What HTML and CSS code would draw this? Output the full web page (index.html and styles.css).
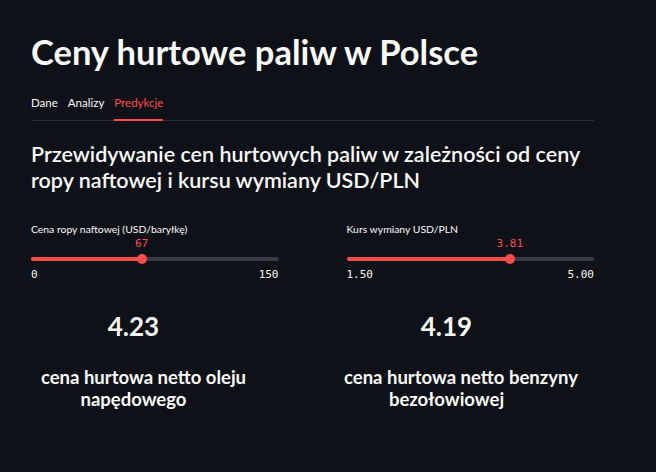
FILE: index.html
```html
<!DOCTYPE html>
<html lang="pl">
<head>
<meta charset="utf-8">
<title>Ceny hurtowe paliw w Polsce</title>
<link rel="stylesheet" href="styles.css">
</head>
<body>
<main class="main">
  <h1 class="title">Ceny hurtowe paliw w Polsce</h1>
  <nav class="tabs">
    <span class="tab">Dane</span>
    <span class="tab">Analizy</span>
    <span class="tab tab-active">Predykcje</span>
  </nav>
  <h3 class="subheader">Przewidywanie cen hurtowych paliw w zależności od ceny<br>ropy naftowej i kursu wymiany USD/PLN</h3>
  <section class="sliders">
    <div class="slider">
      <div class="slider-label">Cena ropy naftowej (USD/baryłkę)</div>
      <div class="slider-value-row">
        <span class="slider-value" style="left: 44.67%">67</span>
      </div>
      <div class="slider-track">
        <div class="slider-fill" style="width: 44.67%"></div>
        <div class="slider-thumb" style="left: 44.67%"></div>
      </div>
      <div class="slider-ticks"><span>0</span><span>150</span></div>
    </div>
    <div class="slider">
      <div class="slider-label">Kurs wymiany USD/PLN</div>
      <div class="slider-value-row">
        <span class="slider-value" style="left: 66%">3.81</span>
      </div>
      <div class="slider-track">
        <div class="slider-fill" style="width: 66%"></div>
        <div class="slider-thumb" style="left: 66%"></div>
      </div>
      <div class="slider-ticks"><span>1.50</span><span>5.00</span></div>
    </div>
  </section>
  <section class="results">
    <div class="result">
      <div class="result-value">4.23</div>
      <div class="result-label">
        <span class="line">cena hurtowa netto oleju</span>
        <span class="line line-last">napędowego</span>
      </div>
    </div>
    <div class="result">
      <div class="result-value">4.19</div>
      <div class="result-label">
        <span class="line">cena hurtowa netto benzyny</span>
        <span class="line line-last">bezołowiowej</span>
      </div>
    </div>
  </section>
</main>
</body>
</html>
```

FILE: styles.css
```css
* { box-sizing: border-box; }

html, body {
  margin: 0;
  padding: 0;
  background: #0e1117;
  color: #fafafa;
  font-family: "Lato", "Noto Sans", sans-serif;
}

.main {
  width: 563px;
  margin-left: 31px;
  padding-top: 32px;
}

.title {
  margin: 0;
  font-size: 34.5px;
  line-height: 40px;
  font-weight: 700;
  color: #fafafa;
}

.tabs {
  display: flex;
  gap: 10px;
  margin-top: 18px;
  box-shadow: inset 0 -1px 0 #2b2e37;
}

.tab {
  font-size: 11.5px;
  line-height: 20px;
  padding: 3px 0 6px;
  border-bottom: 2px solid transparent;
  color: #fafafa;
}

.tab-active {
  color: #ff4b4b;
  border-bottom-color: #ff4b4b;
}

.subheader {
  margin: 20px 0 0;
  font-size: 21.5px;
  line-height: 26px;
  font-weight: 600;
}

.sliders {
  display: grid;
  grid-template-columns: 1fr 1fr;
  column-gap: 68px;
  margin-top: 28px;
}

.slider-label {
  font-size: 10.4px;
  line-height: 16px;
}

.slider-value-row {
  position: relative;
  height: 12px;
  margin-top: 1px;
}

.slider-value {
  position: absolute;
  top: 0;
  transform: translateX(-50%);
  font-family: "DejaVu Sans Mono", "Liberation Mono", monospace;
  font-size: 11px;
  line-height: 12px;
  color: #ff4b4b;
}

.slider-track {
  position: relative;
  height: 4px;
  margin: 7px 0;
  border-radius: 2px;
  background: #383b44;
}

.slider-fill {
  height: 4px;
  border-radius: 2px;
  background: #ff4b4b;
}

.slider-thumb {
  position: absolute;
  top: -3px;
  width: 10px;
  height: 10px;
  margin-left: -5px;
  border-radius: 50%;
  background: #ff4b4b;
}

.slider-ticks {
  display: flex;
  justify-content: space-between;
  font-family: "DejaVu Sans Mono", "Liberation Mono", monospace;
  font-size: 11px;
  line-height: 14px;
  margin-top: 1px;
}

.results {
  display: grid;
  grid-template-columns: 225px 225px;
  column-gap: 88px;
  margin-top: 28px;
}

.result {
  text-align: center;
}

.result-value {
  font-size: 26px;
  line-height: 32px;
  font-weight: 700;
  padding-right: 20px;
}

.result-label {
  margin-top: 24px;
  font-size: 18.5px;
  line-height: 22px;
  font-weight: 700;
  white-space: nowrap;
}

.line {
  display: block;
}

.line-last {
  padding-right: 20px;
}
```
